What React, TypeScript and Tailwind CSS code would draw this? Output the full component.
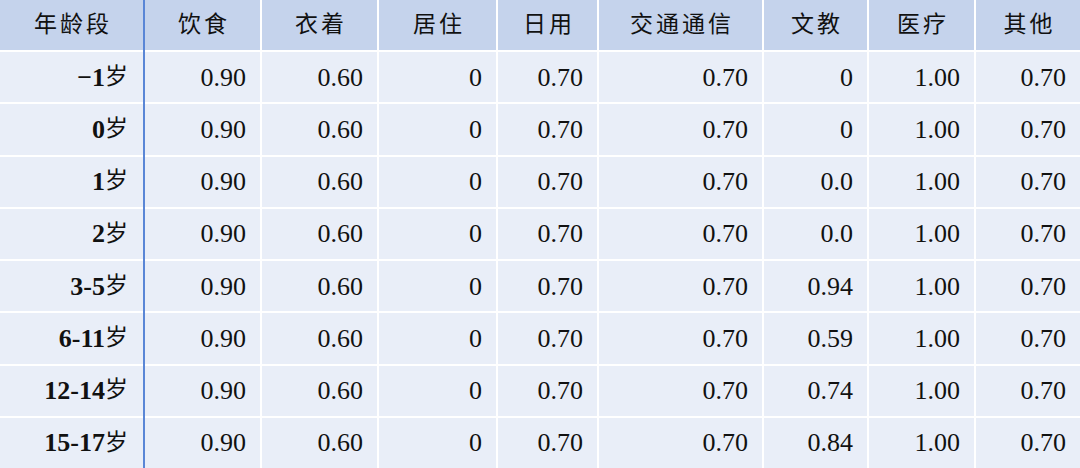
const headers = ['饮食', '衣着', '居住', '日用', '交通通信', '文教', '医疗', '其他'];

const rows: { age: string; vals: string[] }[] = [
  { age: '−1', vals: ['0.90', '0.60', '0', '0.70', '0.70', '0', '1.00', '0.70'] },
  { age: '0', vals: ['0.90', '0.60', '0', '0.70', '0.70', '0', '1.00', '0.70'] },
  { age: '1', vals: ['0.90', '0.60', '0', '0.70', '0.70', '0.0', '1.00', '0.70'] },
  { age: '2', vals: ['0.90', '0.60', '0', '0.70', '0.70', '0.0', '1.00', '0.70'] },
  { age: '3-5', vals: ['0.90', '0.60', '0', '0.70', '0.70', '0.94', '1.00', '0.70'] },
  { age: '6-11', vals: ['0.90', '0.60', '0', '0.70', '0.70', '0.59', '1.00', '0.70'] },
  { age: '12-14', vals: ['0.90', '0.60', '0', '0.70', '0.70', '0.74', '1.00', '0.70'] },
  { age: '15-17', vals: ['0.90', '0.60', '0', '0.70', '0.70', '0.84', '1.00', '0.70'] },
];

const font = { fontFamily: '"Liberation Serif", "Noto Sans CJK SC", serif' };

export default function App() {
  return (
    <div className="flex h-[468px] w-[1080px] bg-white text-[#111]" style={font}>
      {/* first column, blue rule on the right */}
      <div className="grid w-[145px] grid-rows-[50px_repeat(8,1fr)] gap-y-[2px] border-r-2 border-[#5a86d6]">
        <div className="flex items-center justify-center bg-[#c5d3ec] pl-[3px] text-[23px] tracking-[3px]">
          年龄段
        </div>
        {rows.map((r) => (
          <div key={r.age} className="flex items-center justify-end bg-[#e9eef8] pr-[15px] text-[26px]">
            <span className="font-bold">{r.age}</span>
            <span className="text-[23px]">岁</span>
          </div>
        ))}
      </div>

      {/* data columns */}
      <div className="grid flex-1 grid-cols-[115px_115px_117px_99px_163px_103px_105px_1fr] grid-rows-[50px_repeat(8,1fr)] gap-[2px]">
        {headers.map((h) => (
          <div key={h} className="flex items-center justify-center bg-[#c5d3ec] pl-[3px] text-[23px] tracking-[3px]">
            {h}
          </div>
        ))}
        {rows.map((r) =>
          r.vals.map((v, i) => (
            <div key={r.age + i} className="flex items-center justify-end bg-[#e9eef8] pr-[14px] text-[26px]">
              {v}
            </div>
          ))
        )}
      </div>
    </div>
  );
}
